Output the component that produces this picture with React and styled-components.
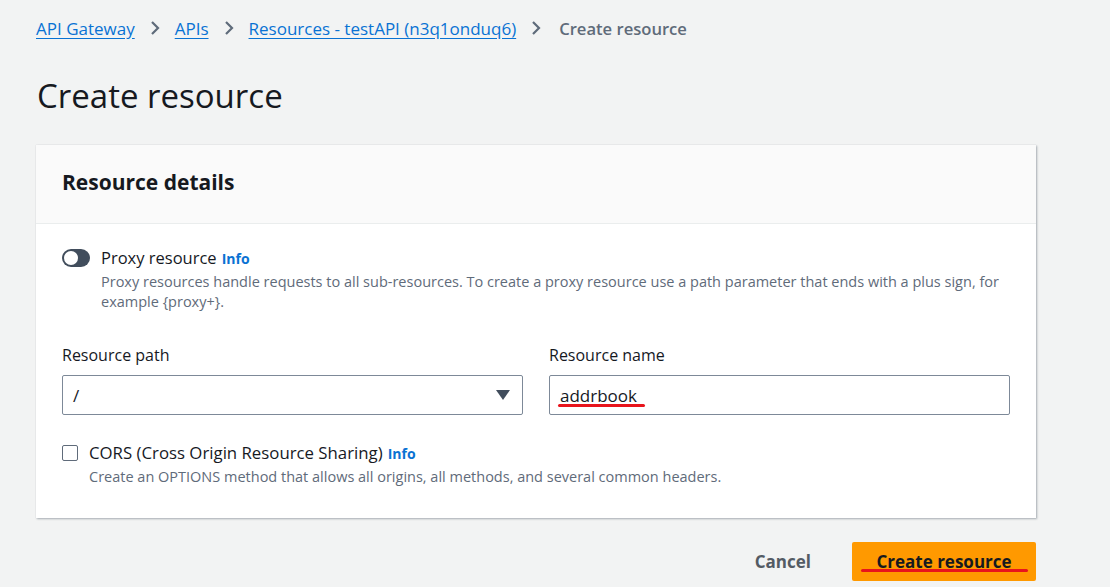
import styled, { createGlobalStyle } from "styled-components";

const Global = createGlobalStyle`
  html, body {
    margin: 0;
    padding: 0;
    background: #f2f3f3;
    font-family: "Open Sans", "Noto Sans", sans-serif;
    color: #16191f;
  }
`;

const Page = styled.div`
  width: 1110px;
  height: 587px;
  overflow: hidden;
  padding: 15px 74px 0 36px;
  box-sizing: border-box;
`;

const Crumbs = styled.nav`
  display: flex;
  align-items: center;
  gap: 15px;
  font-size: 17px;
  height: 26px;
`;

const Crumb = styled.a`
  color: #0972d3;
  text-decoration: underline;
  text-underline-offset: 3px;
`;

const Current = styled.span`
  color: #5f6b7a;
  font-weight: 600;
  font-size: 16.6px;
  margin-left: 3px;
`;

const Chevron = () => (
  <svg width="10" height="16" viewBox="0 0 10 16">
    <path d="M2 2l6 6-6 6" fill="none" stroke="#5f6b7a" strokeWidth="2.2" />
  </svg>
);

const Title = styled.h1`
  margin: 33px 0 0 1px;
  font-size: 33px;
  font-weight: 400;
  line-height: 44px;
`;

const Card = styled.section`
  margin-top: 27px;
  background: #fff;
  box-shadow: 1px 1px 2px rgba(0, 22, 40, 0.3), 0 0 1px rgba(0, 22, 40, 0.15);
`;

const CardHead = styled.div`
  background: #fafafa;
  border-bottom: 1px solid #eaeded;
  height: 79px;
  box-sizing: border-box;
  padding: 22px 26px 0;
`;

const CardTitle = styled.h2`
  margin: 0;
  font-size: 21px;
  line-height: 30px;
  font-weight: 700;
`;

const CardBody = styled.div`
  padding: 23px 26px 31px;
  display: flex;
  flex-direction: column;
`;

const Option = styled.div`
  display: flex;
  gap: ${(p) => p.$gap}px;
  align-items: flex-start;
`;

const Toggle = styled.span`
  width: 28px;
  height: 18px;
  border-radius: 9px;
  background: #414d5c;
  position: relative;
  margin-top: 2px;
  flex: none;
  &::after {
    content: "";
    position: absolute;
    left: 2px;
    top: 2px;
    width: 14px;
    height: 14px;
    border-radius: 50%;
    background: #fff;
  }
`;

const Box = styled.span`
  width: 14px;
  height: 14px;
  border: 1px solid #5f6b7a;
  border-radius: 2px;
  background: #fff;
  margin-top: 3px;
  flex: none;
`;

const OptionText = styled.div`
  display: flex;
  flex-direction: column;
`;

const OptionLabel = styled.div`
  font-size: ${(p) => p.$size}px;
  line-height: 22px;
`;

const Info = styled.span`
  color: #0972d3;
  font-weight: 700;
  font-size: 14px;
  margin-left: 5px;
`;

const Hint = styled.div`
  font-size: 14.5px;
  line-height: 20px;
  color: #5f6b7a;
  margin-top: 2px;
`;

const Fields = styled.div`
  display: grid;
  grid-template-columns: 1fr 1fr;
  gap: 26px;
  margin: 32px 0 27px;
`;

const Field = styled.label`
  display: flex;
  flex-direction: column;
  gap: 9px;
`;

const FieldLabel = styled.span`
  font-size: 16px;
  line-height: 22px;
  color: #16191f;
`;

const Control = styled.div`
  height: 40px;
  box-sizing: border-box;
  border: 1px solid #7d8998;
  border-radius: 2px;
  display: flex;
  align-items: center;
  justify-content: space-between;
  padding: 0 12px 0 10px;
  font-size: 17px;
`;

const Marked = styled.span`
  position: relative;
  &::after {
    content: "";
    position: absolute;
    left: -${(p) => p.$left}px;
    right: -${(p) => p.$right}px;
    bottom: ${(p) => p.$bottom}px;
    height: 3px;
    border-radius: 2px;
    background: #e8141c;
  }
`;

const Caret = () => (
  <svg width="14" height="10" viewBox="0 0 14 10">
    <path d="M0 0h14L7 10z" fill="#414d5c" />
  </svg>
);

const Actions = styled.div`
  display: flex;
  justify-content: flex-end;
  align-items: center;
  gap: 41px;
  margin-top: 24px;
`;

const Cancel = styled.button`
  background: none;
  border: none;
  font-family: inherit;
  font-size: 17px;
  font-weight: 700;
  color: #545b64;
  padding: 0;
`;

const Primary = styled.button`
  background: #ff9900;
  border: none;
  border-radius: 2px;
  height: 39px;
  width: 184px;
  font-family: inherit;
  font-size: 17px;
  font-weight: 700;
  color: #16191f;
  padding: 0;
`;

const proxyHint =
  "Proxy resources handle requests to all sub-resources. To create a proxy resource use a path parameter that ends with a plus sign, for example {proxy+}.";

export default function App() {
  return (
    <>
      <Global />
      <Page>
        <Crumbs>
          <Crumb>API Gateway</Crumb>
          <Chevron />
          <Crumb>APIs</Crumb>
          <Chevron />
          <Crumb>Resources - testAPI (n3q1onduq6)</Crumb>
          <Chevron />
          <Current>Create resource</Current>
        </Crumbs>
        <Title>Create resource</Title>
        <Card>
          <CardHead>
            <CardTitle>Resource details</CardTitle>
          </CardHead>
          <CardBody>
            <Option $gap={11}>
              <Toggle />
              <OptionText>
                <OptionLabel $size={16.5}>
                  Proxy resource<Info>Info</Info>
                </OptionLabel>
                <Hint>{proxyHint}</Hint>
              </OptionText>
            </Option>
            <Fields>
              <Field>
                <FieldLabel>Resource path</FieldLabel>
                <Control>
                  <span>/</span>
                  <Caret />
                </Control>
              </Field>
              <Field>
                <FieldLabel>Resource name</FieldLabel>
                <Control>
                  <Marked $left={2} $right={8} $bottom={0}>
                    addrbook
                  </Marked>
                </Control>
              </Field>
            </Fields>
            <Option $gap={11}>
              <Box />
              <OptionText>
                <OptionLabel $size={16.8}>
                  CORS (Cross Origin Resource Sharing)<Info>Info</Info>
                </OptionLabel>
                <Hint>Create an OPTIONS method that allows all origins, all methods, and several common headers.</Hint>
              </OptionText>
            </Option>
          </CardBody>
        </Card>
        <Actions>
          <Cancel>Cancel</Cancel>
          <Primary>
            <Marked $left={15} $right={16} $bottom={1}>
              Create resource
            </Marked>
          </Primary>
        </Actions>
      </Page>
    </>
  );
}
